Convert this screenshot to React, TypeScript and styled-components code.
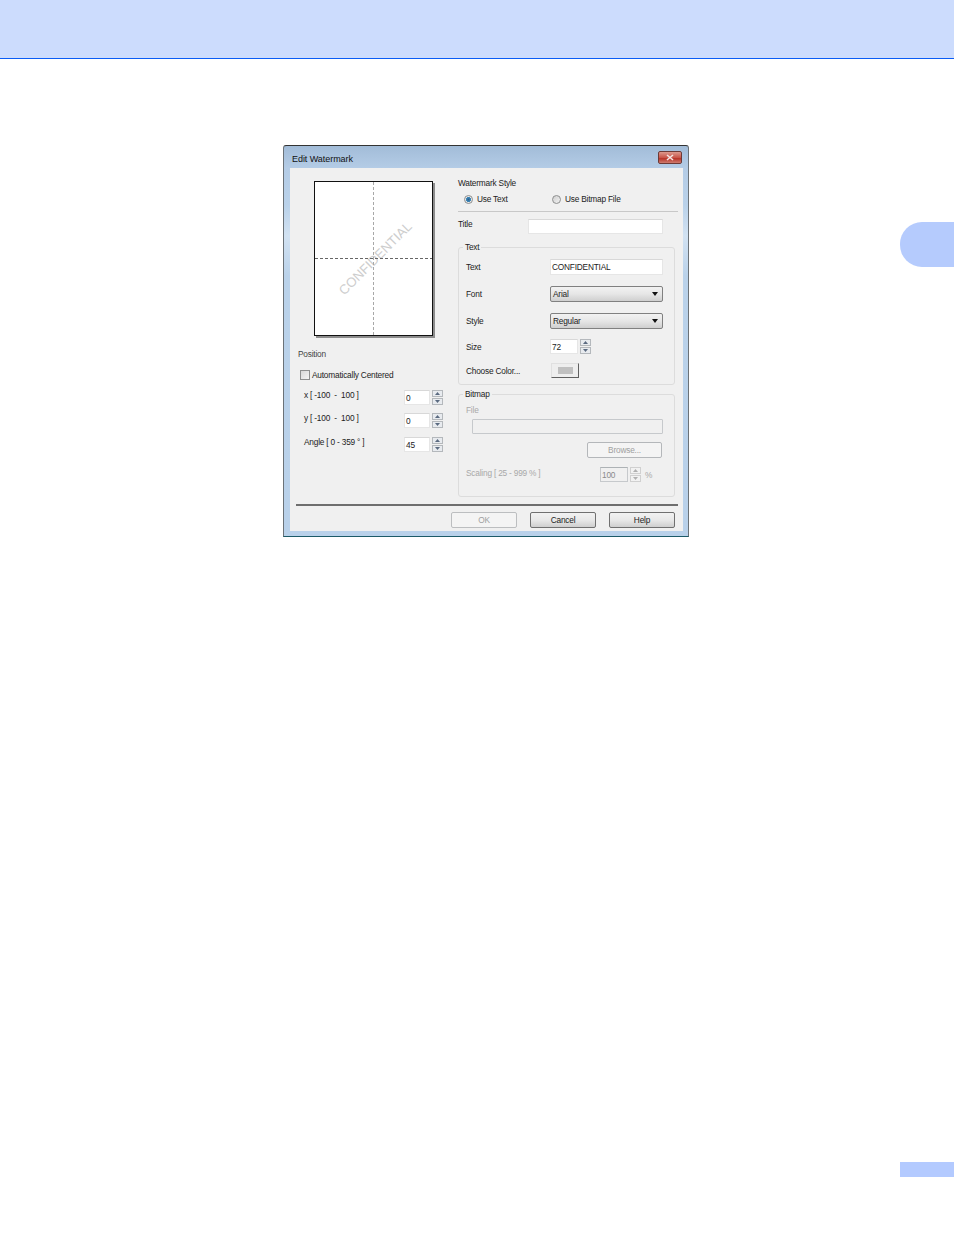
import React from "react"
import styled, { createGlobalStyle } from "styled-components"

const Global = createGlobalStyle`
html,body{margin:0;padding:0;background:#fff;}
body{font-family:"Liberation Sans",Arial,sans-serif;}
`

const SpinBox = ({ dim }: { dim?: boolean }) => (
  <Spin $dim={dim}>
    <SpinHalf $dim={dim}><svg width="5" height="3" viewBox="0 0 5 3"><path d="M2.5 0L5 3H0z" fill={dim ? "#b0b0b0" : "#5a6a80"} /></svg></SpinHalf>
    <SpinHalf $dim={dim}><svg width="5" height="3" viewBox="0 0 5 3"><path d="M0 0h5L2.5 3z" fill={dim ? "#b0b0b0" : "#5a6a80"} /></svg></SpinHalf>
  </Spin>
)

const Arrow = () => (
  <svg width="6" height="4" viewBox="0 0 6 4"><path d="M0 0h6L3 4z" fill="#111" /></svg>
)

const App = () => {
  return (
    <Page>
      <Global />
      <Header />
      <SideTab />
      <PageTab />
      <Dialog>
        <TitleBar>
          <TitleText>Edit Watermark</TitleText>
          <CloseBtn>
            <svg width="8" height="7" viewBox="0 0 8 7">
              <path d="M1 1l6 5M7 1L1 6" stroke="#f4e6e4" strokeWidth="1.6" />
            </svg>
          </CloseBtn>
        </TitleBar>
        <Client>
          <Body>
            <LeftCol>
              <Preview>
                <svg width="117" height="153" viewBox="0 0 117 153">
                  <text x="60" y="81" textAnchor="middle" fontFamily="Liberation Sans" fontSize="13.2" fill="#cdcdcd" transform="rotate(-45 60 76)">CONFIDENTIAL</text>
                  <path d="M58.5 0V153" stroke="#a8a8a8" strokeWidth="1" strokeDasharray="3 2" />
                  <path d="M0 76.5H117" stroke="#666" strokeWidth="1" strokeDasharray="3 2" />
                </svg>
              </Preview>
              <PositionLabel>Position</PositionLabel>
              <CheckRow>
                <Check />
                <Label>Automatically Centered</Label>
              </CheckRow>
              <SpinRows>
                <SpinRow>
                  <SpinLabel>x [ -100&nbsp; -&nbsp; 100 ]</SpinLabel>
                  <Input $w={26} $h={15}>0</Input>
                  <SpinBox />
                </SpinRow>
                <SpinRow>
                  <SpinLabel>y [ -100&nbsp; -&nbsp; 100 ]</SpinLabel>
                  <Input $w={26} $h={15}>0</Input>
                  <SpinBox />
                </SpinRow>
                <SpinRow $mt={1}>
                  <SpinLabel>Angle [ 0 - 359 ° ]</SpinLabel>
                  <Input $w={26} $h={15}>45</Input>
                  <SpinBox />
                </SpinRow>
              </SpinRows>
            </LeftCol>
            <RightCol>
              <Label>Watermark Style</Label>
              <RadioRow>
                <RadioItem>
                  <Radio $on />
                  <Label>Use Text</Label>
                </RadioItem>
                <RadioItem>
                  <Radio />
                  <Label>Use Bitmap File</Label>
                </RadioItem>
              </RadioRow>
              <Sep />
              <TitleRow>
                <TitleLabel>Title</TitleLabel>
                <Input $w={135} $h={15} />
              </TitleRow>
              <Group $h={138} $top={11}>
                <Legend>Text</Legend>
                <FormRow>
                  <FieldLabel>Text</FieldLabel>
                  <Input $w={113} $h={16}>CONFIDENTIAL</Input>
                </FormRow>
                <FormRow $mt={11}>
                  <FieldLabel>Font</FieldLabel>
                  <Select>Arial<Arrow /></Select>
                </FormRow>
                <FormRow $mt={11}>
                  <FieldLabel>Style</FieldLabel>
                  <Select>Regular<Arrow /></Select>
                </FormRow>
                <FormRow $mt={10}>
                  <FieldLabel>Size</FieldLabel>
                  <Input $w={28} $h={15}>72</Input>
                  <SpinBox />
                </FormRow>
                <FormRow $mt={9}>
                  <FieldLabel>Choose Color...</FieldLabel>
                  <ColorBtn><Swatch /></ColorBtn>
                </FormRow>
              </Group>
              <Group $h={103} $top={9} $mt={9}>
                <Legend>Bitmap</Legend>
                <Label $dim>File</Label>
                <FileInput />
                <BrowseBtn>Browse...</BrowseBtn>
                <ScaleRow>
                  <ScaleLabel>Scaling [ 25 - 999 % ]</ScaleLabel>
                  <Input $w={28} $h={15} $dim>100</Input>
                  <SpinBox dim />
                  <Percent>%</Percent>
                </ScaleRow>
              </Group>
            </RightCol>
          </Body>
          <Footer>
            <FooterBtn $dim>OK</FooterBtn>
            <FooterBtn>Cancel</FooterBtn>
            <FooterBtn>Help</FooterBtn>
          </Footer>
        </Client>
      </Dialog>
    </Page>
  )
}
export default App

const Page = styled.div`
position:relative;
width:954px;
height:1235px;
overflow:hidden;
background:#fff;
`
const Header = styled.div`
height:58px;
background:#ccdcfd;
border-bottom:1px solid #0a5cf5;
`
const SideTab = styled.div`
position:absolute;
left:900px;
top:222px;
width:54px;
height:45px;
background:#b5cbfd;
border-radius:22px 0 0 22px;
`
const PageTab = styled.div`
position:absolute;
left:900px;
top:1162px;
width:54px;
height:15px;
background:#b3caff;
`
const Dialog = styled.div`
box-sizing:border-box;
width:406px;
height:392px;
margin:86px 0 0 283px;
padding:0 5px 5px 6px;
border:1px solid #6b7278;
border-bottom-color:#1c5a68;
border-top-color:#333;
border-radius:3px 3px 0 0;
background:linear-gradient(#a2bcd8 0,#b4cce6 22px,#bad2ea 60px,#d2e2f2 90px,#bad2ea 130px,#b9d1ea 100%);
display:flex;
flex-direction:column;
`
const TitleBar = styled.div`
height:22px;
flex:none;
display:flex;
justify-content:space-between;
align-items:center;
padding-left:2px;
padding-top:3px;
box-sizing:border-box;
`
const TitleText = styled.span`
font-size:9px;
letter-spacing:-0.05px;
color:#111;
`
const CloseBtn = styled.div`
width:24px;
height:13px;
margin-right:1px;
position:relative;
top:-1px;
box-sizing:border-box;
border:1px solid #6d3a36;
border-radius:2px;
background:linear-gradient(#dd9a8e,#c9564a 50%,#b8362a 60%,#cf7c70);
display:flex;
align-items:center;
justify-content:center;
`
const Client = styled.div`
flex:1;
background:#f0f0f0;
display:flex;
flex-direction:column;
`
const Body = styled.div`
height:336px;
display:flex;
`
const LeftCol = styled.div`
width:168px;
padding-top:13px;
box-sizing:border-box;
`
const Preview = styled.div`
box-sizing:border-box;
width:119px;
height:155px;
margin-left:24px;
background:#fff;
border:1px solid #111;
box-shadow:2px 2px 0 #8c8c8c;
svg{display:block;}
`
const Label = styled.div<{ $dim?: boolean }>`
font-size:8.3px;
letter-spacing:-0.2px;
line-height:12px;
color:${p => p.$dim ? "#a8a8a8" : "#222"};
white-space:nowrap;
`
const PositionLabel = styled(Label)`
margin:12px 0 0 8px;
color:#444;
`
const CheckRow = styled.div`
display:flex;
align-items:center;
gap:2px;
height:11px;
margin:9px 0 0 10px;
`
const Check = styled.div`
box-sizing:border-box;
width:10px;
height:10px;
background:linear-gradient(135deg,#d8d8d8,#f4f4f4);
border:1px solid #8e8f8f;
`
const SpinRows = styled.div`
display:flex;
flex-direction:column;
gap:8px;
margin-top:10px;
padding-left:14px;
`
const SpinRow = styled.div<{ $mt?: number }>`
display:flex;
height:15px;
margin-top:${p => p.$mt ?? 0}px;
`
const SpinLabel = styled(Label)`
width:100px;
line-height:11px;
`
const Input = styled.div<{ $w: number; $h: number; $dim?: boolean }>`
box-sizing:border-box;
width:${p => p.$w}px;
height:${p => p.$h}px;
line-height:${p => p.$h - 1}px;
background:${p => p.$dim ? "#f0f0f0" : "#fff"};
border:1px solid ${p => p.$dim ? "#c6c9cc" : "#e6e6e6"};
border-top-color:${p => p.$dim ? "#adb2b5" : "#d8d8d8"};
padding-left:1px;
font-size:8.3px;
letter-spacing:-0.2px;
color:${p => p.$dim ? "#8a8a8a" : "#222"};
`
const Spin = styled.div<{ $dim?: boolean }>`
box-sizing:border-box;
width:11px;
height:15px;
margin-left:2px;
display:flex;
flex-direction:column;
gap:1px;
`
const SpinHalf = styled.div<{ $dim?: boolean }>`
flex:1;
box-sizing:border-box;
border:1px solid ${p => p.$dim ? "#d0d0d0" : "#b4b8bc"};
background:${p => p.$dim ? "#f2f2f2" : "#e8ebef"};
display:flex;
align-items:center;
justify-content:center;
`
const RightCol = styled.div`
width:220px;
padding-top:9px;
box-sizing:border-box;
`
const RadioRow = styled.div`
display:grid;
grid-template-columns:88px auto;
height:10px;
margin-top:4px;
padding-left:6px;
`
const RadioItem = styled.div`
display:flex;
align-items:center;
gap:4px;
`
const Radio = styled.div<{ $on?: boolean }>`
box-sizing:border-box;
width:9px;
height:9px;
border-radius:50%;
border:1px solid #8e8f8f;
background:${p => p.$on ? "radial-gradient(circle,#2a5f8e 0,#3f88b8 45%,#e8e8e8 55%)" : "linear-gradient(135deg,#cfcfcf,#f2f2f2)"};
`
const Sep = styled.div`
height:1px;
background:#c8c8c8;
margin-top:8px;
`
const TitleRow = styled.div`
display:flex;
margin-top:7px;
`
const TitleLabel = styled(Label)`
width:70px;
line-height:11px;
`
const Group = styled.div<{ $h: number; $top: number; $mt?: number }>`
position:relative;
box-sizing:border-box;
width:217px;
height:${p => p.$h}px;
margin-top:${p => p.$mt ?? 13}px;
padding:${p => p.$top}px 0 0 7px;
border:1px solid #dcdcdc;
border-radius:3px;
`
const Legend = styled.div`
position:absolute;
top:-7px;
left:4px;
padding:0 2px;
background:#f0f0f0;
font-size:8.3px;
letter-spacing:-0.2px;
line-height:12px;
color:#222;
`
const FormRow = styled.div<{ $mt?: number }>`
display:flex;
align-items:center;
margin-top:${p => p.$mt ?? 0}px;
`
const FieldLabel = styled(Label)`
width:84px;
`
const Select = styled.div`
box-sizing:border-box;
width:113px;
height:16px;
padding:0 4px 0 2px;
display:flex;
justify-content:space-between;
align-items:center;
font-size:8.3px;
letter-spacing:-0.2px;
color:#222;
border:1px solid #808080;
border-radius:2px;
background:linear-gradient(#f2f2f2,#e6e6e6 50%,#cfcfcf);
`
const ColorBtn = styled.div`
box-sizing:border-box;
width:28px;
height:15px;
margin-left:1px;
display:flex;
align-items:center;
justify-content:center;
background:#eeeeee;
border:1px solid #e0e0e0;
border-right-color:#606060;
border-bottom-color:#606060;
`
const Swatch = styled.div`
width:15px;
height:7px;
background:#c0c0c0;
`
const FileInput = styled.div`
box-sizing:border-box;
width:191px;
height:15px;
margin:3px 0 0 6px;
border:1px solid #c6c9cc;
border-radius:1px;
`
const BrowseBtn = styled.div`
box-sizing:border-box;
width:75px;
height:16px;
line-height:14px;
margin:8px 0 0 121px;
text-align:center;
font-size:8.3px;
letter-spacing:-0.2px;
color:#a0a0a0;
background:#f4f4f4;
border:1px solid #b4b7ba;
border-radius:2px;
`
const ScaleRow = styled.div`
display:flex;
align-items:center;
height:15px;
margin-top:9px;
`
const ScaleLabel = styled(Label)`
width:134px;
color:#a8a8a8;
line-height:11px;
position:relative;
top:-1px;
`
const Percent = styled(Label)`
margin-left:4px;
color:#a8a8a8;
`
const Footer = styled.div`
box-sizing:border-box;
height:27px;
margin:0 5px 0 6px;
border-top:2px solid #6e6e6e;
padding:6px 0 0 155px;
display:flex;
gap:13px;
`
const FooterBtn = styled.div<{ $dim?: boolean }>`
box-sizing:border-box;
width:66px;
height:16px;
line-height:14px;
text-align:center;
font-size:8.3px;
letter-spacing:-0.2px;
color:${p => p.$dim ? "#a0a0a0" : "#222"};
border:1px solid ${p => p.$dim ? "#bcbec0" : "#707070"};
border-radius:2px;
background:${p => p.$dim ? "#f4f4f4" : "linear-gradient(#f2f2f2,#e8e8e8 50%,#cfcfcf)"};
`
